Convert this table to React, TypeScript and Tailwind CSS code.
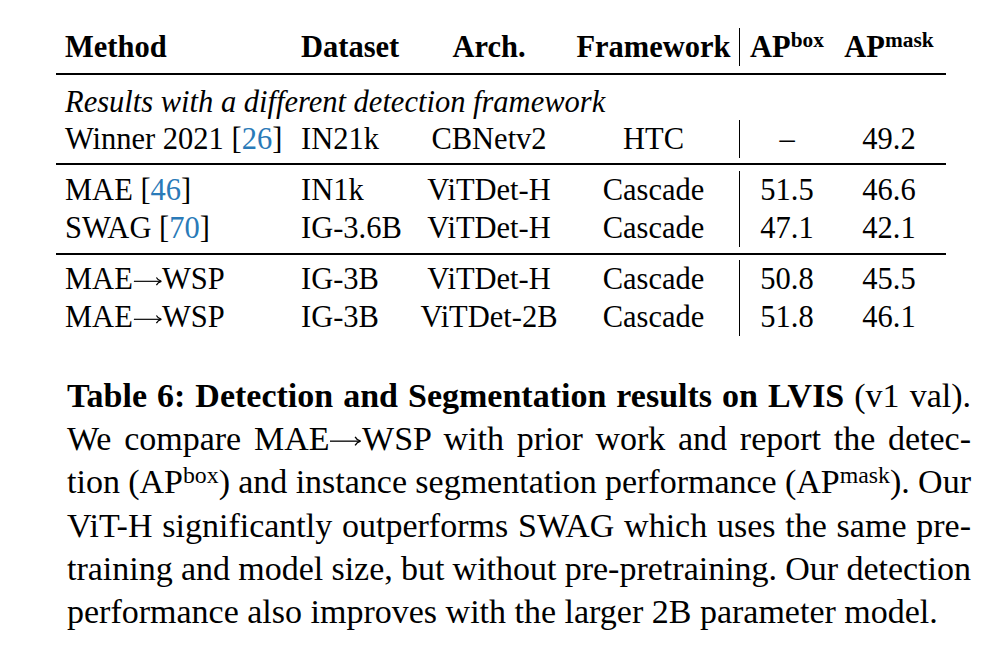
import React from "react";

type Cells = [React.ReactNode, React.ReactNode, React.ReactNode, React.ReactNode, React.ReactNode, React.ReactNode];

const Cite = ({ n }: { n: number }) => (
  <>
    [<span className="text-[#2a7ab8]">{n}</span>]
  </>
);

// LaTeX style \rightarrow, about 1em wide sitting on the math axis
const Arrow = () => (
  <svg viewBox="0 0 100 50" className="inline-block w-[0.96em] h-[0.48em] align-[0.02em]">
    <path d="M3 25 H95" stroke="currentColor" strokeWidth="4" fill="none" />
    <path d="M80 12 Q85 22 97 25 Q85 28 80 38" stroke="currentColor" strokeWidth="4" fill="none" />
  </svg>
);

function Row({ cells, h = "h-[38px] leading-[38px]", bold = false }: { cells: Cells; h?: string; bold?: boolean }) {
  return (
    <div className={`flex ${h} ${bold ? "font-bold" : ""}`}>
      <div className="w-[236px] pl-[9px] whitespace-nowrap">{cells[0]}</div>
      <div className="w-[118px] pl-[9px] whitespace-nowrap">{cells[1]}</div>
      <div className="w-[158px] text-center whitespace-nowrap">{cells[2]}</div>
      <div className="w-[171px] text-center whitespace-nowrap">{cells[3]}</div>
      <div className="w-[95px] border-l border-black text-center whitespace-nowrap">{cells[4]}</div>
      <div className="w-[110px] text-center whitespace-nowrap">{cells[5]}</div>
    </div>
  );
}

const Rule = ({ className = "" }: { className?: string }) => <div className={`h-[2px] bg-black ${className}`} />;

const Sup = ({ children }: { children: React.ReactNode }) => (
  <sup className="text-[70%] leading-none -top-[0.45em]">{children}</sup>
);

const MaeWsp = () => (
  <>
    MAE
    <Arrow />
    WSP
  </>
);

// caption lines are set one per block so they break where the reference does
const captionLines: React.ReactNode[] = [
  <>
    <b>Table 6: Detection and Segmentation results on LVIS</b> (v1 val).
  </>,
  <>
    We compare <MaeWsp /> with prior work and report the detec-
  </>,
  <>
    tion (AP<Sup>box</Sup>) and instance segmentation performance (AP<Sup>mask</Sup>). Our
  </>,
  <>ViT-H significantly outperforms SWAG which uses the same pre-</>,
  <>training and model size, but without pre-pretraining. Our detection</>,
  <>performance also improves with the larger 2B parameter model.</>,
];

export default function App() {
  return (
    <div className="w-[990px] h-[662px] bg-white text-black overflow-hidden font-['Liberation_Serif','Times_New_Roman',serif]">
      <div className="ml-[56px] pt-[28px] w-[890px] text-[30.5px]">
        <Row
          bold
          cells={[
            "Method",
            "Dataset",
            "Arch.",
            "Framework",
            <>
              AP<Sup>box</Sup>
            </>,
            <>
              AP<Sup>mask</Sup>
            </>,
          ]}
        />
        <Rule className="mt-[7px]" />

        <div className="pt-[9px]">
          <div className="h-[36px] leading-[36px] pl-[9px] italic whitespace-nowrap">
            Results with a different detection framework
          </div>
          <Row cells={[<>Winner 2021 <Cite n={26} /></>, "IN21k", "CBNetv2", "HTC", "–", "49.2"]} />
        </div>
        <Rule className="mt-[5px]" />

        <div className="pt-[6px]">
          <Row cells={[<>MAE <Cite n={46} /></>, "IN1k", "ViTDet-H", "Cascade", "51.5", "46.6"]} />
          <Row cells={[<>SWAG <Cite n={70} /></>, "IG-3.6B", "ViTDet-H", "Cascade", "47.1", "42.1"]} />
        </div>
        <Rule className="mt-[6px]" />

        <div className="pt-[5px]">
          <Row cells={[<MaeWsp />, "IG-3B", "ViTDet-H", "Cascade", "50.8", "45.5"]} />
          <Row cells={[<MaeWsp />, "IG-3B", "ViTDet-2B", "Cascade", "51.8", "46.1"]} />
        </div>
      </div>

      <div className="ml-[67px] mt-[38px] w-[904px] text-[34px] leading-[43.2px]">
        {captionLines.map((line, i) => (
          <div
            key={i}
            className={
              i < captionLines.length - 1
                ? "text-justify [text-align-last:justify] [word-spacing:-3px] whitespace-nowrap"
                : "whitespace-nowrap"
            }
          >
            {line}
          </div>
        ))}
      </div>
    </div>
  );
}
